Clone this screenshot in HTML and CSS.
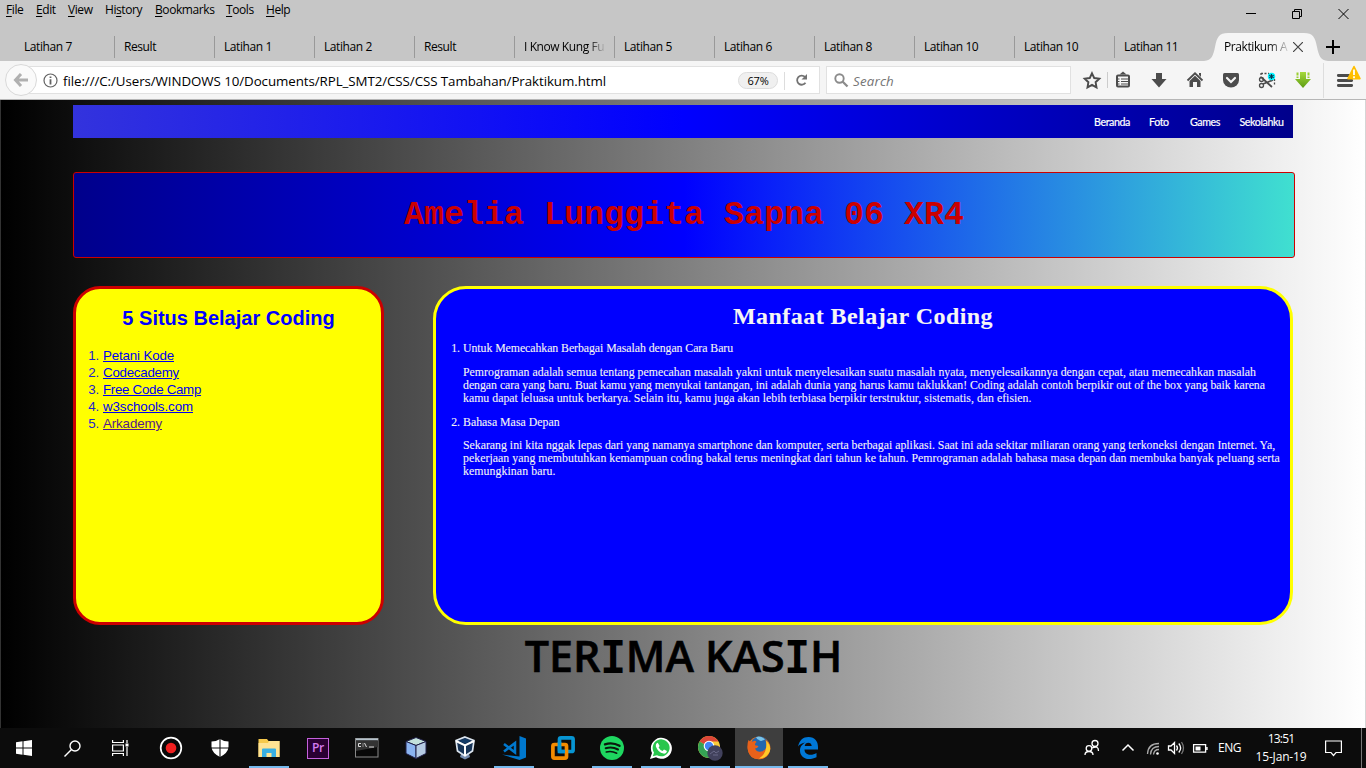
FILE: index.html
```html
<!DOCTYPE html>
<html lang="id">
<head>
<meta charset="utf-8">
<title>Praktikum</title>
<link rel="stylesheet" href="styles.css">
</head>
<body>
<header class="chrome">
  <div class="menubar">
    <nav class="menus"><span class="m1"><u>F</u>ile</span><span class="m2"><u>E</u>dit</span><span class="m3"><u>V</u>iew</span><span class="m4">Hi<u>s</u>tory</span><span class="m5"><u>B</u>ookmarks</span><span class="m6"><u>T</u>ools</span><span class="m7"><u>H</u>elp</span></nav>
    <svg class="wincontrols" width="116" height="28" viewBox="0 0 116 28" fill="none" stroke="#000" stroke-width="1">
      <path d="M6 13.5H16"/><path d="M52.500 11.500h7v7h-7zM54.500 11.500v-2h7v7h-2"/><path d="M98.500 9l10 10M108.500 9l-10 10"/>
    </svg>
  </div>
  <div class="tabs">
    <div class="tab">Latihan 7</div><div class="tab">Result</div><div class="tab">Latihan 1</div><div class="tab">Latihan 2</div><div class="tab">Result</div><div class="tab fade">I Know Kung Fu</div><div class="tab">Latihan 5</div><div class="tab">Latihan 6</div><div class="tab">Latihan 8</div><div class="tab">Latihan 10</div><div class="tab">Latihan 10</div><div class="tab last">Latihan 11</div>
    <div class="active">
      <svg class="shape" width="124" height="28" viewBox="0 0 124 28"><path d="M0 28C8 27 9 23 11 14C13 4 15 0 24 0H100C109 0 111 4 113 14C115 23 116 27 124 28Z" fill="#f5f5f5"/></svg>
      <span class="active-title">Praktikum A</span>
      <svg class="tabx" width="10" height="10" viewBox="0 0 10 10" stroke="#444" stroke-width="1.200"><path d="M0 0L10 10M10 0L0 10"/></svg>
    </div>
    <svg class="plus" width="14" height="14" viewBox="0 0 14 14" stroke="#000" stroke-width="2"><path d="M7 0V14M0 7H14"/></svg>
  </div>
  <div class="toolbar">
    <div class="back"><svg width="16" height="14" viewBox="0 0 16 14" fill="none" stroke="#b0b0b0" stroke-width="3"><path d="M8 1L2.500 7L8 13M3 7H15"/></svg></div>
    <div class="urlbar">
      <svg width="15" height="15" viewBox="0 0 15 15" fill="none" stroke="#636363" stroke-width="1.200"><circle cx="7.500" cy="7.500" r="6.500"/><path d="M7.500 6.200V11.500M7.500 3.500V5" stroke-width="1.800"/></svg>
      <span class="url">file:///C:/Users/WINDOWS 10/Documents/RPL_SMT2/CSS/CSS Tambahan/Praktikum.html</span>
      <span class="zoom">67%</span>
      <svg class="reload" width="13" height="13" viewBox="0 0 13 13" fill="none" stroke="#737373" stroke-width="1.800"><path d="M10 2.900A4.600 4.600 0 1 0 10.500 8.800"/><path d="M12 0V5.500H6.500Z" fill="#737373" stroke="none"/></svg>
    </div>
    <div class="search">
      <svg width="15" height="15" viewBox="0 0 15 15" fill="none" stroke="#8b8b8b"><circle cx="5.500" cy="5.500" r="4.200" stroke-width="1.900"/><path d="M8.500 8.500L13.500 13.500" stroke-width="2.300"/></svg>
      <span>Search</span>
    </div>
    <svg class="tools" width="286" height="38" viewBox="1080 61 286 38">
      <path d="M1092 73.300L1094.200 78L1099.300 78.600L1095.600 82.200L1096.500 87.400L1092 84.900L1087.500 87.400L1088.400 82.200L1084.700 78.600L1089.800 78Z" fill="none" stroke="#4c4c4c" stroke-width="1.900"/>
      <path d="M1107.500 72V88" stroke="#ccc"/>
      <rect x="1117" y="75.500" width="12" height="11" rx="1" fill="none" stroke="#4c4c4c" stroke-width="2"/><path d="M1119.500 74.500L1123 71.500L1126.500 74.500Z" fill="#4c4c4c"/><path d="M1118 79H1119.500M1121 79H1128M1118 81.500H1119.500M1121 81.500H1128M1118 84H1119.500M1121 84H1128" stroke="#4c4c4c" stroke-width="1.200"/>
      <path d="M1156 73H1162V79H1166.500L1159 87.500L1151.500 79H1156Z" fill="#4c4c4c"/>
      <path d="M1187.500 80.500L1195 73.300L1202.500 80.500" fill="none" stroke="#4c4c4c" stroke-width="1.800"/><path d="M1189.500 81L1195 75.800L1200.500 81V87H1197V82H1193V87H1189.500ZM1199 73H1201V77L1199 75Z" fill="#4c4c4c"/>
      <path d="M1224.500 73H1237.500Q1239 73 1239 74.500V80A8 7.500 0 0 1 1223 80V74.500Q1223 73 1224.500 73Z" fill="#4c4c4c"/><path d="M1227 78L1231 82L1235 78" fill="none" stroke="#f5f5f5" stroke-width="2.200" stroke-linecap="round"/>
      <g fill="none" stroke="#4c4c4c" stroke-width="1.300"><path d="M1261 73.500H1269M1261 73V80M1274.500 79V85" stroke-dasharray="2 1.500"/><path d="M1262 78L1272 87M1263 84L1273 80" stroke-width="1.800"/><circle cx="1261.500" cy="79.500" r="2"/><circle cx="1261.500" cy="85.500" r="2"/></g>
      <circle cx="1271.500" cy="76.500" r="3.700" fill="#00f3ff"/><path d="M1271.500 74V79M1269.300 75.300L1273.700 77.700M1269.300 77.700L1273.700 75.300" stroke="#063950" stroke-width="1.100"/>
      <defs><linearGradient id="leaf" x2="0" y2="1"><stop stop-color="#a6d93c"/><stop offset="1" stop-color="#5d9c12"/></linearGradient></defs>
      <path d="M1300 72H1306V79H1311L1303 88L1295 79H1300Z" fill="url(#leaf)"/><path d="M1297.500 72.500V78M1308.500 72.500V78" stroke="#9bd033" stroke-width="2" stroke-dasharray="3 1"/>
      <path d="M1323.500 63V98" stroke="#ddd"/>
      <path d="M1338.300 75.500H1351.700M1338.300 80.500H1351.700M1338.300 85.500H1351.700" stroke="#4c4c4c" stroke-width="2.800" stroke-linecap="round"/>
      <path d="M1354 66.500L1360 78.700H1348Z" fill="#ffbf00" stroke="#ffbf00" stroke-linejoin="round" stroke-width="1.500"/><path d="M1354 69.500V75M1354 76.300V78.300" stroke="#fff" stroke-width="1.800"/>
    </svg>
  </div>
</header>
<main class="page">
  <nav class="sitenav"><span class="n1">Beranda</span><span class="n2">Foto</span><span class="n3">Games</span><span class="n4">Sekolahku</span></nav>
  <h1 class="banner">Amelia Lunggita Sapna 06 XR4</h1>
  <div class="columns">
    <section class="sites">
      <h2>5 Situs Belajar Coding</h2>
      <ol>
        <li><a class="s1">Petani Kode</a></li>
        <li><a class="s2">Codecademy</a></li>
        <li><a class="s3">Free Code Camp</a></li>
        <li><a class="s4">w3schools.com</a></li>
        <li><a class="s5 visited">Arkademy</a></li>
      </ol>
    </section>
    <section class="benefits">
      <h2>Manfaat Belajar Coding</h2>
      <div class="item"><span class="num">1.</span><span class="b1">Untuk Memecahkan Berbagai Masalah dengan Cara Baru</span></div>
      <p><span class="b2">Pemrograman adalah semua tentang pemecahan masalah yakni untuk menyelesaikan suatu masalah nyata, menyelesaikannya dengan cepat, atau memecahkan masalah</span><br>
      <span class="b3">dengan cara yang baru. Buat kamu yang menyukai tantangan, ini adalah dunia yang harus kamu taklukkan! Coding adalah contoh berpikir out of the box yang baik karena</span><br>
      <span class="b4">kamu dapat leluasa untuk berkarya. Selain itu, kamu juga akan lebih terbiasa berpikir terstruktur, sistematis, dan efisien.</span></p>
      <div class="item second"><span class="num">2.</span><span class="b4">Bahasa Masa Depan</span></div>
      <p class="tight"><span class="b5">Sekarang ini kita nggak lepas dari yang namanya smartphone dan komputer, serta berbagai aplikasi. Saat ini ada sekitar miliaran orang yang terkoneksi dengan Internet. Ya,</span><br>
      <span class="b6">pekerjaan yang membutuhkan kemampuan coding bakal terus meningkat dari tahun ke tahun. Pemrograman adalah bahasa masa depan dan membuka banyak peluang serta</span><br>
      <span class="b7">kemungkinan baru.</span></p>
    </section>
  </div>
  <div class="thanks">TER<span class="serifed">I</span>MA KAS<span class="serifed">I</span>H</div>
</main>
<footer class="taskbar">
  <div class="apps">
    <div class="app sys"><svg width="16" height="16" viewBox="0 0 16 16" fill="#fff"><path d="M0 2.300L6.500 1.300V7.500H0ZM7.500 1.200L16 0V7.500H7.500ZM0 8.500H6.500V14.700L0 13.700ZM7.500 8.500H16V16L7.500 14.800Z"/></svg></div>
    <div class="app sys"><svg width="17" height="17" viewBox="0 0 17 17" fill="none" stroke="#fff" stroke-width="1.400"><circle cx="11" cy="6" r="5"/><path d="M7.500 9.500L.5 16.500"/></svg></div>
    <div class="app sys"><svg width="17" height="16" viewBox="0 0 17 16" fill="none" stroke="#fff" stroke-width="1.200"><path d="M.6 0V2.500H11.400V0M.6 16V13.500H11.400V16M.6 5h10.800v6H.6zM15 0V3M15 7V16"/><path d="M13.500 3.500h3v3h-3z" fill="#fff" stroke="none"/></svg></div>
    <div class="app"><svg width="24" height="24" viewBox="0 0 24 24"><circle cx="12" cy="12" r="10.300" fill="#080808" stroke="#fff" stroke-width="1.700"/><circle cx="12" cy="12" r="5.300" fill="#f02020"/></svg></div>
    <div class="app"><svg width="18" height="18" viewBox="0 0 18 18"><path d="M9 0Q13 2.500 17.500 2.500V8Q17 14 9 18Q1 14 .5 8V2.500Q5 2.500 9 0Z" fill="#fff"/><path d="M9 0V18M0 9H18" stroke="#111" stroke-width="1.100"/></svg></div>
    <div class="app on"><svg width="22" height="20" viewBox="0 0 22 20"><path d="M.5 1H9L10.500 3H21.500V19H.5Z" fill="#f6c94c"/><path d="M.5 5H10L11 3H21.500V19H.5Z" fill="#ffe393"/><path d="M4 19V11.500Q4 10.500 5 10.500H17Q18 10.500 18 11.500V19H13.500V15H8.500V19Z" fill="#38afe3"/></svg></div>
    <div class="app"><div class="pr">Pr</div></div>
    <div class="app"><svg width="24" height="20" viewBox="0 0 24 20"><rect x=".5" y=".5" width="22.500" height="18.500" fill="#080808" stroke="#888"/><path d="M1 1.500H23" stroke="#b5c3cc" stroke-width="2"/><path d="M1 2.500H23V9L1 13Z" fill="#333"/><path d="M6 5.500H3.500V8.500H6M8 5.500V6.500M8 7.500V8.500M9.500 5L11.500 9M14 9H19" fill="none" stroke="#ddd"/></svg></div>
    <div class="app"><svg width="24" height="24" viewBox="0 0 24 24" stroke="#202049" stroke-width="1"><path d="M12 1.500L22 5.500L12 9.500L2 5.500Z" fill="#c4e2dc"/><path d="M2 5.500L12 9.500V22.500L2 17.500Z" fill="#8ab3f0"/><path d="M22 5.500L12 9.500V22.500L22 17.500Z" fill="#b5cbe3"/></svg></div>
    <div class="app"><svg width="22" height="24" viewBox="0 0 22 24"><path d="M7 18H15L16 21L11 23.500L6 21Z" fill="#758caf"/><path d="M11 1L20 4.500L18.500 15L11 20L3.500 15L2 4.500Z" fill="#173457" stroke="#dce5ef" stroke-width="1.700"/><path d="M2 5L11 9.500L20 5M11 9.500V20" fill="none" stroke="#fff" stroke-width="2"/><path d="M11 2.700L16.500 4.900L11 7.500L5.500 4.900Z" fill="#123b67"/></svg></div>
    <div class="app on"><svg width="24" height="24" viewBox="0 0 24 24"><path d="M17.500 0L24 2.500V21.500L17.500 24L0 18.500L17.500 20.500Z" fill="#0078ce"/><path d="M2 8L13 16.500V7L2 15.500" fill="none" stroke="#0078ce" stroke-width="2.500"/></svg></div>
    <div class="app"><svg width="24" height="24" viewBox="0 0 24 24" fill="none" stroke-width="3.700"><rect x="8.500" y="1.900" width="13.600" height="13.600" rx="1.500" stroke="#0795d3"/><rect x="1.900" y="8.500" width="13.600" height="13.600" rx="1.500" stroke="#f38b00"/><path d="M8.500 6V15.500H14" stroke="#0795d3"/></svg></div>
    <div class="app on"><svg width="24" height="24" viewBox="0 0 24 24" fill="none" stroke="#0a180d" stroke-linecap="round"><circle cx="12" cy="12" r="12" fill="#1ed760" stroke="none"/><path d="M5 8.300Q12.500 5.800 19.500 9.800" stroke-width="2.400"/><path d="M5.700 12.300Q12 10.300 18 13.500" stroke-width="2"/><path d="M6.300 16Q11.500 14.500 16.700 17.200" stroke-width="1.600"/></svg></div>
    <div class="app on"><svg width="24" height="24" viewBox="0 0 24 24"><path d="M1 23L3 17A10.500 10.500 0 1 1 7 21.300Z" fill="#fff"/><path d="M3.800 20.300L5 16.500A8.500 8.500 0 1 1 8 19.300Z" fill="#29c64d"/><path d="M8.800 6.800L10.600 10L9.600 11.500Q11 14 13.500 15L15 13.500L18 15Q17.500 18 14.500 17.600Q9 16.500 6.900 10.500Q6.500 7.500 8.800 6.800Z" fill="#fff"/></svg></div>
    <div class="app on"><svg width="26" height="26" viewBox="0 0 26 26"><circle cx="12" cy="12" r="11" fill="#f9cb39"/><path d="M12 12L2.500 6.500A11 11 0 0 1 21.500 6.500H12Z" fill="#dc4638"/><path d="M12 12L2.500 6.500A11 11 0 0 0 12 23L16 15Z" fill="#35a354"/><circle cx="12" cy="11" r="5.300" fill="#fff"/><circle cx="12" cy="11" r="4.200" fill="#4285f4"/><circle cx="18" cy="18" r="7.700" fill="#41415c"/><path d="M13 19L17 16L19 18L22 16M16 20H21" fill="none" stroke="#686887"/></svg></div>
    <div class="app current"><svg width="24" height="24" viewBox="0 0 24 24"><circle cx="12" cy="12" r="11.300" fill="#f0761b"/><circle cx="12.500" cy="9.500" r="9" fill="#2467ae"/><path d="M9 1Q14 -.5 18 3.500Q14 6 12 4Q10 4 9 1Z" fill="#78c3e8"/><path d="M1.500 4Q3 6 6 5.500Q8 4 9.500 6Q7 8 8.500 9.500Q10.500 9 11.500 10.500Q10 12.500 8 12.500Q10 16.500 14 15.500Q18 15 19.500 11Q20 7 18 3.500Q24 8 23 14Q21 23 12 23.300Q2 23 .7 13Q0 8 1.500 4Z" fill="#e8611a"/><path d="M19 4.500Q25 10 22.500 16Q19 23 12 22.500Q21 17 19 4.500Z" fill="#ffca28"/></svg></div>
    <div class="app on"><svg width="20" height="22" viewBox="0 0 20 22"><path d="M0 9.500C1.500 3 5 0 10.500 0C17 0 20 4.500 20 10V12.500H6.500C6.500 18.500 14 19 18.500 16V20.300C10 24.500 2 21 2 13.500C2 9.500 4.500 7 7.500 5.500C4 6 1.500 7.500 0 9.500ZM6.700 9H13.700C13.700 4.500 7 4.500 6.700 9Z" fill="#0078d7"/></svg></div>
  </div>
  <svg class="tray" width="134" height="40" viewBox="1078 728 134 40" fill="none" stroke="#fff" stroke-width="1.300">
    <circle cx="1095" cy="743.500" r="3"/><circle cx="1089" cy="748.500" r="2.800"/><path d="M1085 755Q1085 751.500 1089 751.500Q1093 751.500 1093 755M1092 748Q1098.500 745 1098.500 751"/>
    <path d="M1122.500 750.500L1128 745L1133.500 750.500" stroke-width="1.500"/>
    <g stroke="#aaa"><path d="M1147.500 754Q1148 743.500 1159 743.500M1150.500 754.500Q1151 746.500 1159 746.500M1153.500 754.500Q1154 749.500 1159 749.500"/></g><circle cx="1157.500" cy="753.500" r="1.300" fill="#fff" stroke="none"/>
    <path d="M1168.500 746H1171L1174.500 742.500V753.500L1171 750H1168.500ZM1176.500 745.500Q1178.500 748 1176.500 750.500M1178.800 743.500Q1182.500 748 1178.800 752.500"/><path d="M1181.500 742Q1185.500 748 1181.500 754" stroke="#777"/>
    <path d="M1193.600 744.600h12v7.500h-12zM1207 747V750" /><path d="M1195.500 746.500h5v4h-5z" fill="#fff" stroke="none"/>
  </svg>
  <span class="lang">ENG</span>
  <div class="clock"><span class="time">13:51</span><span class="date">15-Jan-19</span></div>
  <svg class="notify" width="17" height="17" viewBox="0 0 17 17" fill="none" stroke="#fff" stroke-width="1.200"><path d="M.6 1H16.400V12.500H11L8.500 15.500L6 12.500H.6Z"/></svg>
  <div class="peek"></div>
</footer>
</body>
</html>
```
FILE: styles.css
```css
*{box-sizing:border-box}
body{margin:0;width:1366px;height:768px;overflow:hidden;display:flex;flex-direction:column;font:12px/16px "Open Sans","Noto Sans",sans-serif;color:#000}
svg{display:block;flex:none}
.chrome{height:100px;background:#c6c6c6;flex:none}
.menubar{height:33px;display:flex;justify-content:space-between;padding:0 11px 0 6px}
.menus{display:flex;padding-top:2px;letter-spacing:-.42px;white-space:nowrap}
.menus u{text-underline-offset:2px;text-decoration-thickness:1px}
.m1{width:30px}.m2{width:32px}.m3{width:37px}.m4{width:50px}.m5{width:71px}.m6{width:40px}.m7{width:30px}
.wincontrols{margin-right:-1px}
.tabs{height:28px;display:flex;padding-left:15px;letter-spacing:-.42px}
.tab{width:100px;height:22px;margin-top:3px;padding:3px 0 0 9px;border-right:1px solid #999;white-space:nowrap;overflow:hidden;flex:none}
.fade{background:linear-gradient(90deg,#000 74%,transparent 92%);-webkit-background-clip:text;background-clip:text;color:transparent;padding-right:9px}
.last{border-right:0;width:91px}
.active{width:124px;position:relative;margin:0 2px 0 -2px;flex:none}
.shape{position:absolute;left:0;top:0}
.active-title{position:absolute;left:20px;top:6px;width:64px;overflow:hidden;white-space:nowrap;background:linear-gradient(90deg,#000 70%,#0002 100%);-webkit-background-clip:text;background-clip:text;color:transparent}
.tabx{position:absolute;left:89px;top:9px}
.plus{margin:7px 0 0 -4px}
.toolbar{height:39px;background:#f5f5f5;border-bottom:1px solid #b6b6b6;display:flex;align-items:center}
.back{width:32px;height:32px;border:1px solid #d9d9d9;border-radius:50%;background:#fafafa;margin:0 -16px 0 5px;z-index:1;display:flex;align-items:center;justify-content:center;flex:none}
.urlbar{width:799px;height:28px;border:1px solid #e1e1e1;background:#fff;display:flex;align-items:center;padding-left:21px;flex:none}
.url{font-size:13.33px;letter-spacing:-.076px;line-height:20px;margin-left:5px;width:675px;padding-top:1px;white-space:nowrap}
.zoom{position:relative;width:40px;height:17px;margin-top:1px;border:1px solid #ddd;border-radius:9px;background:#f0f0f0;font-size:11px;line-height:15px;text-align:center;letter-spacing:-.2px}
.zoom::after{content:"";position:absolute;left:45px;top:-1px;width:1px;height:18px;background:#ddd}
.reload{margin-left:17px}
.search{width:245px;height:28px;margin-left:6px;border:1px solid #e1e1e1;background:#fff;display:flex;align-items:center;padding-left:7px;flex:none}
.search span{font-style:italic;font-size:13.33px;letter-spacing:.18px;color:#757575;margin-left:4px;padding-top:2px}
.tools{margin-left:9px}
.page{height:628px;flex:none;background:linear-gradient(90deg,#000,#fff);border-left:1px solid #333;border-right:1px solid #d5d5d5;padding:5px 0 0 72px}
.sitenav{width:1220px;height:33px;background:linear-gradient(90deg,#33d,#00f 50%,#00008b);color:#fff;font:10.67px/33px Lato,sans-serif;display:flex;padding-left:1021px;letter-spacing:-.4px;-webkit-text-stroke:.2px #fff}
.n1{width:55px}.n2{width:41px}.n3{width:49.500px}
.banner{margin:34px 0 0;width:1222px;height:86px;border:1px solid #c00;border-radius:3px;background:linear-gradient(90deg,#00008b,#00f 50%,turquoise);color:#c00;font:bold 33.33px/84px "Courier New","Liberation Mono",monospace;text-align:center}
.columns{display:flex;gap:49px;margin-top:28px}
.sites{width:311px;height:339px;border:3px solid #c00;border-radius:27px;background:#ff0;color:#00f;font-family:"Liberation Sans",sans-serif}
.sites h2{margin:17px 0 0;font-size:20px;line-height:24px;text-align:center}
.sites ol{margin:17px 0 0;padding-left:27px;font-size:13.33px;line-height:17px;color:#22c}
.sites a{color:#00e;text-decoration:underline}
.sites .visited{color:#551a8b}
.s1{letter-spacing:-.15px}.s2{letter-spacing:-.25px}.s3{letter-spacing:-.3px}.s4{letter-spacing:-.087px}.s5{letter-spacing:-.125px}
.benefits{width:860px;height:339px;border:3px solid #ff0;border-radius:33px;background:#00f;color:#f5f5f5;font:11.8px/13px "Liberation Serif",serif;white-space:nowrap;-webkit-text-stroke:.1px #f5f5f5}
.benefits h2{margin:13px 0 0;font-size:24px;line-height:28px;letter-spacing:.45px;text-align:center}
.item{display:flex;margin-top:12px}
.num{width:27px;padding-right:3px;text-align:right}
.benefits p{margin:11px 0 0 27px}
.item.second{margin-top:11px}
.benefits .tight{margin-top:10px}
.b1{letter-spacing:-.05px}.b2{letter-spacing:.03px}.b3{letter-spacing:-.02px}.b4{letter-spacing:.015px}.b5{letter-spacing:.003px}.b6{letter-spacing:.045px}.b7{letter-spacing:.085px}
.thanks{width:1221px;height:60px;margin-top:1px;text-align:center;font:600 43px/60px "Open Sans",sans-serif;-webkit-text-stroke:.6px #000}
.serifed{font:42px/40px "DejaVu Sans Mono",monospace;-webkit-text-stroke:1.800px #000}
.taskbar{height:40px;flex:none;background:#0c0c0c;color:#fff;display:flex;align-items:center}
.apps{display:flex;width:1078px}
.app{width:49px;height:40px;display:flex;align-items:center;justify-content:center;flex:none}
.sys{width:48px}
.sys+.app:not(.sys){margin-left:3px}
.on{background:linear-gradient(#76b9ed,#76b9ed) 4px 100%/40px 2px no-repeat}
.current{background:linear-gradient(#76b9ed,#76b9ed) 0 100%/48px 2px no-repeat,linear-gradient(#3e3e3e,#3e3e3e) 0 0/48px 40px no-repeat}
.app:not(.sys){padding-right:1px}
.pr{width:22px;height:21px;border:1.500px solid #c560dc;background:#2a0033;color:#d57cf0;font-size:12px;font-weight:600;line-height:17px;text-align:center;letter-spacing:-.3px}
.lang{width:33px;padding-left:6px;letter-spacing:-.45px}
.clock{width:72px;display:flex;flex-direction:column;align-items:center;line-height:18px;height:40px;padding-top:2px}
.time{letter-spacing:-.85px}.date{letter-spacing:-.16px}
.notify{margin-left:8px}
.peek{width:1px;height:40px;background:#777;margin-left:19px}
```
